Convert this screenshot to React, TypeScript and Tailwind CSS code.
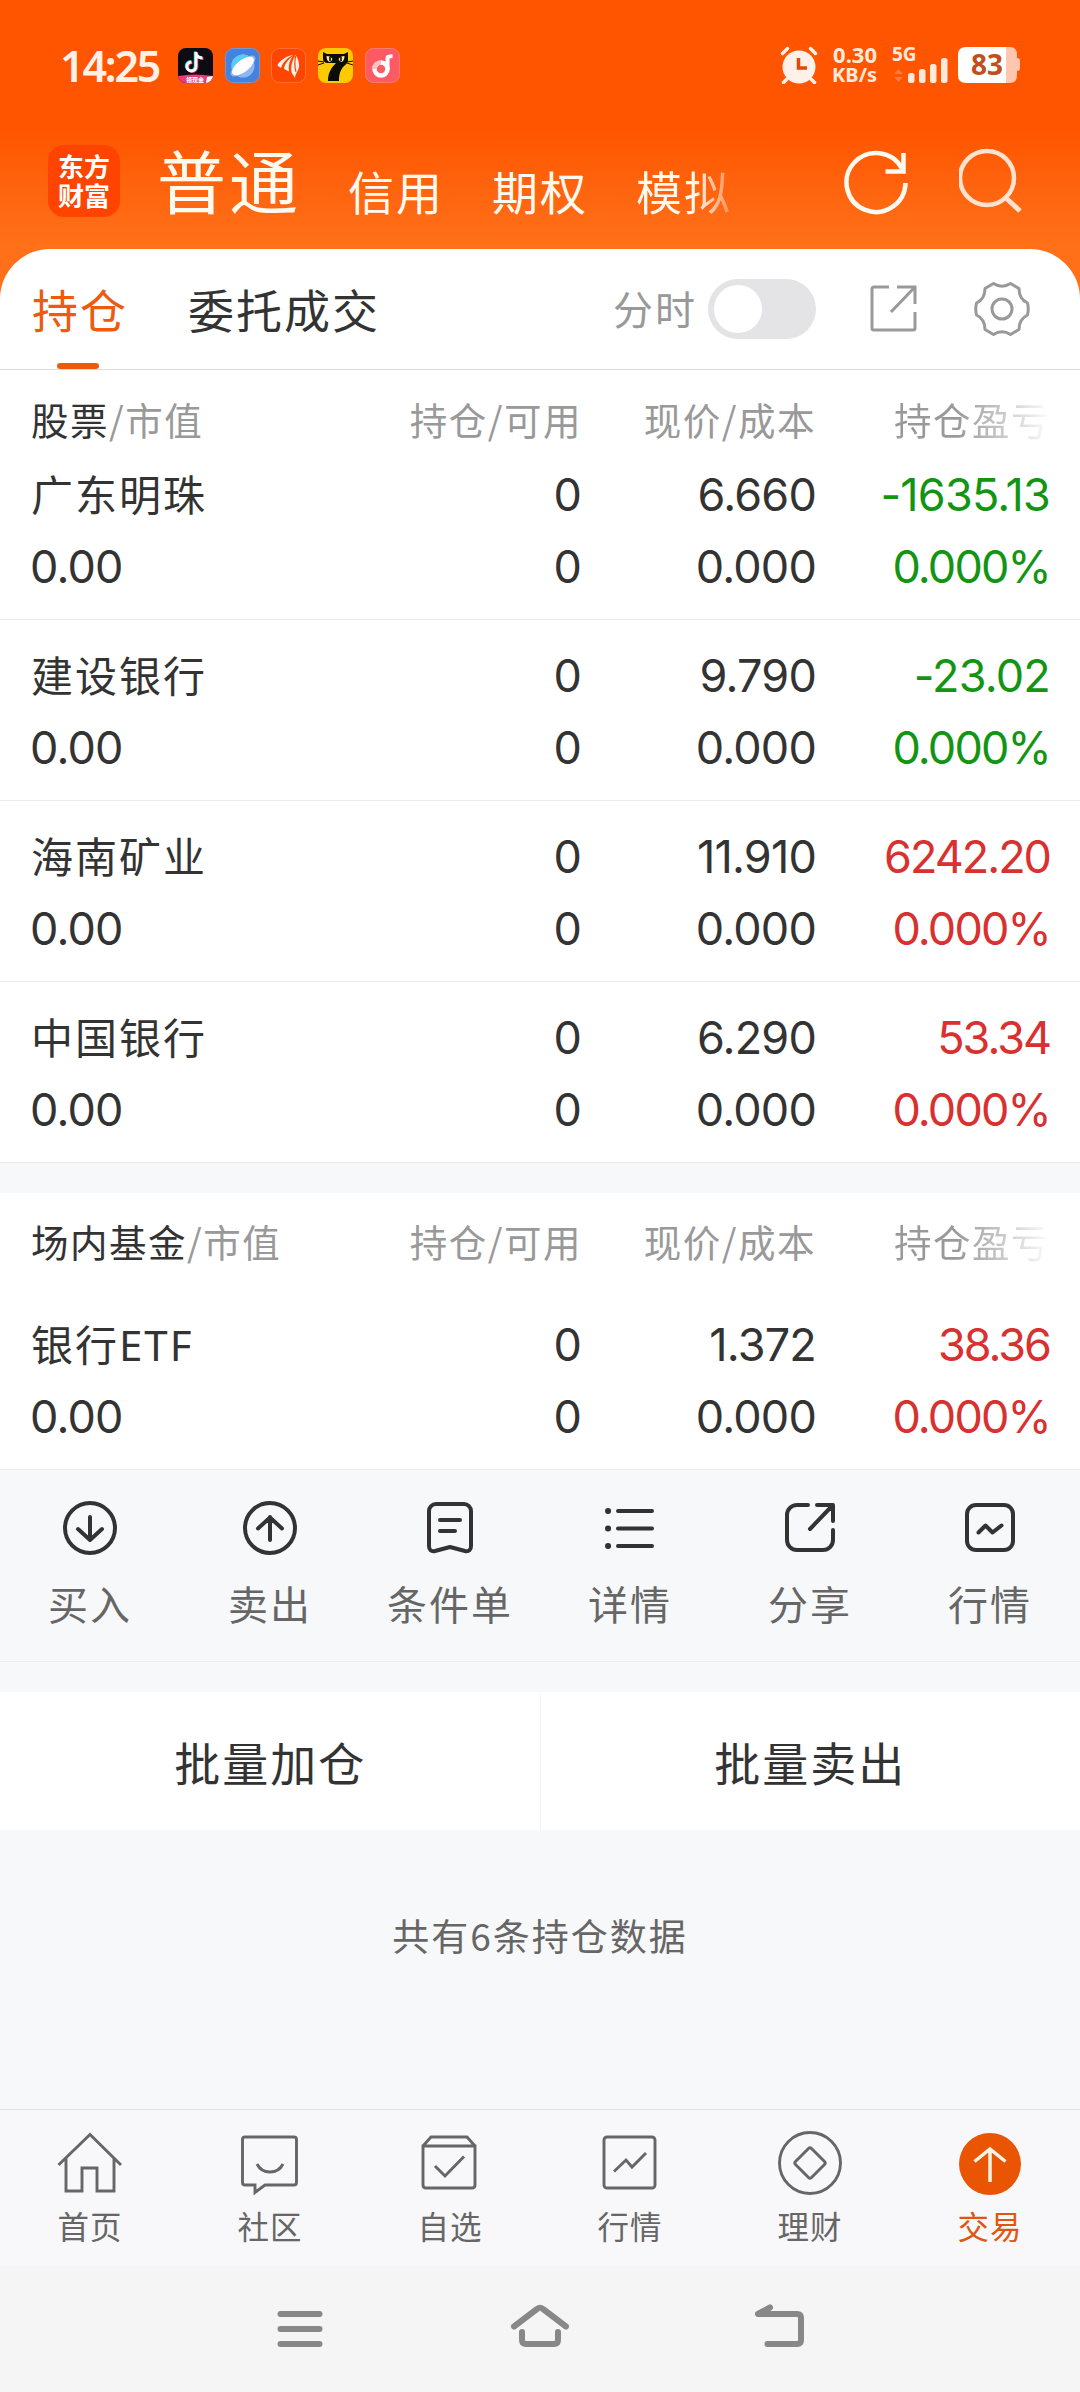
import { useState } from 'react'
import type { ReactNode } from 'react'
import clsx from 'clsx'

type Holding = {
  name: string
  value: string
  amount: string
  usable: string
  price: string
  cost: string
  profit: string
  rate: string
  up: boolean
}

const stocks: Holding[] = [
  { name: '广东明珠', value: '0.00', amount: '0', usable: '0', price: '6.660', cost: '0.000', profit: '-1635.13', rate: '0.000%', up: false },
  { name: '建设银行', value: '0.00', amount: '0', usable: '0', price: '9.790', cost: '0.000', profit: '-23.02', rate: '0.000%', up: false },
  { name: '海南矿业', value: '0.00', amount: '0', usable: '0', price: '11.910', cost: '0.000', profit: '6242.20', rate: '0.000%', up: true },
  { name: '中国银行', value: '0.00', amount: '0', usable: '0', price: '6.290', cost: '0.000', profit: '53.34', rate: '0.000%', up: true },
]

const funds: Holding[] = [
  { name: '银行ETF', value: '0.00', amount: '0', usable: '0', price: '1.372', cost: '0.000', profit: '38.36', rate: '0.000%', up: true },
]

const cols = 'grid grid-cols-[1fr_200px_235px_234px] pl-[31px] pr-[30px]'

function StatusBar() {
  return (
    <div className="flex h-[130px] items-center pl-[60px] pr-[59px]">
      <span className="w-[118px] whitespace-nowrap font-['Noto_Sans',sans-serif] text-[43px] leading-none font-semibold tracking-[-2.2px] text-[#fff0e8]">14:25</span>
      <div className="flex gap-[11.7px]">
        <svg width="35" height="35" viewBox="0 0 35 35">
          <defs>
            <clipPath id="app"><rect width="35" height="35" rx="8" /></clipPath>
          </defs>
          <g clipPath="url(#app)">
            <rect width="35" height="35" fill="#0d0b14" />
            <g fill="none" strokeWidth="2.800">
              <path d="M18 4v14.5a4.5 4.5 0 1 1-4.5-4.5M18 5c.5 3.500 3 5 6.500 5" stroke="#25e5e0" transform="translate(-.8 -.6)" />
              <path d="M18 4v14.500a4.500 4.500 0 1 1-4.500-4.500M18 5c.5 3.500 3 5 6.500 5" stroke="#f5305c" transform="translate(.9 .6)" />
              <path d="M18 4v14.500a4.500 4.500 0 1 1-4.500-4.500M18 5c.5 3.500 3 5 6.500 5" stroke="#fff" />
            </g>
            <path d="M0 28q17-3 35 0v7H0z" fill="#e83c7c" />
            <text x="8" y="33.500" fontSize="6" fontWeight="700" fill="#fff" fontFamily="Noto Sans CJK SC">领现金</text>
            <path d="M28 35l1-6 6-1v4l-3 3z" fill="#fff" />
          </g>
        </svg>
        <svg width="35" height="35" viewBox="0 0 35 35">
          <rect x=".5" y=".5" width="34" height="34" rx="8" fill="#4482df" stroke="#7795cf" />
          <circle cx="18" cy="18" r="11.500" fill="#8fb6f2" />
          <path d="M6.500 18A11.500 11.500 0 0 1 26 9.800L9 26a11 11 0 0 1-2.500-8z" fill="#55cdf7" />
          <ellipse cx="18" cy="18" rx="15" ry="6" transform="rotate(-38 18 18)" fill="#8fb6f2" />
          <ellipse cx="18" cy="18" rx="13" ry="6" transform="rotate(-38 18 18)" fill="#fff" />
        </svg>
        <svg width="35" height="35" viewBox="0 0 35 35">
          <rect x=".5" y=".5" width="34" height="34" rx="8" fill="#ff4500" stroke="#ff7038" />
          <g fill="#fff0e8">
            <path d="M22 7C15 8 10 12 7 16q-1 1 0 2l3 2c2-6 6-10 12-13z" />
            <path d="M23 7c-5 4-9 8-10 13q0 1 1 1.500l4 2C17 17 19 11 23 7z" />
            <path d="M24.500 7c-3 5-5 11-4 17q0 1 1 2l2.500 4C24 25 29 22 28 16c-.5-4-2-7-3.500-9z" />
          </g>
          <path d="M24.500 8q-1.500 9 .5 16" stroke="#ff4500" strokeWidth="1.200" fill="none" />
        </svg>
        <svg width="35" height="35" viewBox="0 0 35 35">
          <rect width="35" height="35" rx="8" fill="#fcca00" />
          <path d="M5 4l4 2h17l4-2v9q-1 3-4 5c-4 4-5 9-5 15H10c0-8 3-13 8-18H9q-4-1-4-4z" fill="#0c0b06" />
          <path d="M0 13l6 1M0 17l6-2M35 13l-6 1M35 17l-6-2" stroke="#0c0b06" />
          <path d="M8.500 8q4 0 6 3-1 3-3 3-3-1-3-6zM26.500 8q-4 0-6 3 1 3 3 3 3-1 3-6z" fill="#ffe98a" />
          <path d="M12 9v4M23 9v4" stroke="#0c0b06" strokeWidth="1.600" />
        </svg>
        <svg width="35" height="35" viewBox="0 0 35 35">
          <rect x=".5" y=".5" width="34" height="34" rx="8" fill="#fd5a64" stroke="#ff7b74" />
          <circle cx="16" cy="21" r="6.500" fill="none" stroke="#fff" strokeWidth="4.500" />
          <path d="M9.500 21A6.500 6.500 0 0 1 16 14.500" fill="none" stroke="#ffc3c4" strokeWidth="4.500" />
          <path d="M20.500 22V10q0-2.500 2-3l5-1v4l-3 .5V22z" fill="#fff" />
        </svg>
      </div>
      <div className="ml-auto flex items-center">
        <svg width="38" height="38" viewBox="0 0 38 38" fill="none" stroke="#fff0e8" strokeLinecap="round">
          <circle cx="19" cy="21" r="16.500" fill="#fff0e8" stroke="none" />
          <path d="M2.500 7.500l5-5M35.500 7.500l-5-5" strokeWidth="3.500" />
          <path d="M7 33l-3.500 3.500M31 33l3.500 3.500" strokeWidth="3.500" />
          <path d="M18.500 12v10h8.500" stroke="#e04a08" strokeWidth="3.500" strokeLinecap="butt" />
        </svg>
        <div className="ml-3 flex w-[47px] flex-col items-end whitespace-nowrap font-['Noto_Sans',sans-serif] font-bold text-[#ffe9dc]">
          <span className="text-[22px] leading-[19px]">0.30</span>
          <span className="text-[20px] leading-[21px]">KB/s</span>
        </div>
        <svg className="ml-[16px] overflow-visible" width="56" height="38" viewBox="0 0 56 38">
          <text x="-1" y="15" fontSize="19" fontWeight="700" fill="#ffe9dc" fontFamily="Noto Sans">5G</text>
          <path d="M1 28l4.500-5 4.500 5zM1 31l4.500 5 4.500-5z" fill="#ff7a3a" />
          <g fill="#ffe9dc">
            <rect x="15" y="27" width="6.500" height="10" rx="2.500" />
            <rect x="26" y="23" width="6.500" height="14" rx="2.500" />
            <rect x="37" y="18" width="6.500" height="19" rx="2.500" />
            <rect x="48" y="12" width="6.500" height="25" rx="2.500" />
          </g>
        </svg>
        <svg className="ml-[8px]" width="64" height="38" viewBox="0 0 64 38">
          <path d="M48 1h5q7 0 7 8v3q3 0 3 3v7q0 3-3 3v4q0 8-7 8h-5z" fill="#ffc6b0" />
          <path d="M9 1h40v36H9q-8 0-8-8V9q0-8 8-8z" fill="#fff" />
          <text x="30" y="29" textAnchor="middle" fontSize="28" fontWeight="700" fill="#c24e1c" fontFamily="Noto Sans">83</text>
        </svg>
      </div>
    </div>
  )
}

function Header() {
  return (
    <header className="flex h-[119px] items-start pt-[15px] pl-[48px] pr-[57px] text-[#fffaf0]">
      <div className="flex h-[72px] w-[72px] flex-col items-center justify-center rounded-[16px] bg-[#ff4400] pb-[2px] text-[26px] leading-[29px] font-bold text-white">
        <span>东方</span>
        <span>财富</span>
      </div>
      <nav className="-mt-[2px] ml-[37px] flex h-[72px] w-[600px] items-end gap-12 whitespace-nowrap">
        <span className="w-[143px] text-[69px] leading-[72px] tracking-[3px]">普通</span>
        <span className="w-24 text-[46px] leading-[50px] tracking-[2px]">信用</span>
        <span className="w-24 text-[46px] leading-[50px] tracking-[2px]">期权</span>
        <span className="w-24 bg-linear-to-r from-[#fffaf0] from-60% to-[#ff8a4a] bg-clip-text text-[46px] leading-[50px] tracking-[2px] text-transparent">模拟</span>
      </nav>
      <svg className="ml-auto" width="68" height="72" viewBox="0 0 68 72" fill="none" stroke="currentColor" strokeWidth="4.500">
        <path d="M63.500 38A29.500 29.500 0 1 1 60 23.500" />
        <path d="M61.500 8v18.500H43.500" />
      </svg>
      <svg className="ml-[49px]" width="64" height="72" viewBox="0 0 64 72" fill="none" stroke="#ffe3d0" strokeWidth="4.500">
        <circle cx="28" cy="33" r="27" />
        <path d="M46.500 52.500L61 66" strokeWidth="5" />
      </svg>
    </header>
  )
}

function TabBar() {
  const [minute, setMinute] = useState(false)

  return (
    <div className="flex h-[121px] border-b border-[#dddddd] pl-[32px] pr-[50px] text-[46px] tracking-[2px]">
      <div className="flex w-24 flex-col items-center text-[#ee5a10]">
        <span className="h-[114px] leading-[119px]">持仓</span>
        <span className="-ml-[4px] h-[6px] w-[42px] rounded-full bg-[#f2580c]" />
      </div>
      <span className="ml-[60px] leading-[119px] text-[#333333]">委托成交</span>
      <div className="ml-auto flex items-center text-[#999999]">
        <span className="-mt-[2px] text-[40px]">分时</span>
        <button
          onClick={() => setMinute(!minute)}
          className={clsx('ml-[11px] flex h-[60px] w-[108px] items-center rounded-full px-[6px]', minute ? 'justify-end bg-[#f2580c]' : 'bg-[#e4e4e6]')}
        >
          <span className="h-12 w-12 rounded-full bg-white" />
        </button>
        <svg className="ml-[54px]" width="48" height="48" viewBox="0 0 48 48" fill="none" stroke="currentColor" strokeWidth="3">
          <path d="M19 2H4Q2 2 2 4v39q0 2 2 2h39q2 0 2-2V27M27 2h18v17M44 3L21 27" />
        </svg>
        <svg className="ml-[56px]" width="56" height="56" viewBox="0 0 56 56" fill="none" stroke="currentColor" strokeWidth="3" strokeLinejoin="round">
          <path d="M19.500 2.500Q28 8 36.500 2.500L45 7.500Q45 18 53.500 22Q55 28 53.500 34Q45 38 45 48.500L36.500 53.500Q28 48 19.500 53.500L11 48.500Q11 38 2.500 34Q1 28 2.500 22Q11 18 11 7.500Z" />
          <circle cx="28" cy="28" r="10" />
        </svg>
      </div>
    </div>
  )
}

function TableHead({ title, className }: { title: string; className: string }) {
  return (
    <div className={clsx(cols, 'content-center whitespace-nowrap text-right text-[37.500px] leading-[54px] tracking-[1.500px] text-[#999999]', className)}>
      <span className="text-left">
        <span className="text-[#333333]">{title}</span>/市值
      </span>
      <span className="-mr-px">持仓/可用</span>
      <span>现价/成本</span>
      <span className="bg-linear-to-r from-[#999999] from-60% to-[#f8f8f8] to-98% bg-clip-text text-transparent">持仓盈亏</span>
    </div>
  )
}

const num = "font-['Inter','Noto_Sans',sans-serif]"

function Row({ item }: { item: Holding }) {
  const color = item.up ? 'text-[#d8312f]' : 'text-[#139513]'

  return (
    <div className={clsx(cols, 'h-[181px] content-start border-b border-[#ececec] pt-[20px] text-right text-[45px] leading-[72px] tracking-[-0.8px] text-[#333333]')}>
      <span className="text-left font-['Noto_Sans','Noto_Sans_CJK_SC',sans-serif] text-[42px] tracking-[2px]">{item.name}</span>
      <span className={num}>{item.amount}</span>
      <span className={num}>{item.price}</span>
      <span className={clsx(num, color, item.up && 'tracking-[-2px]')}>{item.profit}</span>
      <span className={clsx(num, 'text-left -ml-px')}>{item.value}</span>
      <span className={num}>{item.usable}</span>
      <span className={num}>{item.cost}</span>
      <span className={clsx(num, color, 'tracking-[-1.800px]')}>{item.rate}</span>
    </div>
  )
}

const actions: { label: string; icon: ReactNode }[] = [
  { label: '买入', icon: <><circle cx="30" cy="30" r="25" /><path d="M30 19v23M18 31l12 11 12-11" /></> },
  { label: '卖出', icon: <><circle cx="30" cy="30" r="25" /><path d="M30 42V19M18 30.500l12-11 12 11" /></> },
  { label: '条件单', icon: <path d="M9 13a7 7 0 0 1 7-7h28a7 7 0 0 1 7 7v35q0 6-6 5l-15-4-15 4q-6 1-6-5zM20 22h20M20 33h15" /> },
  { label: '详情', icon: <><path d="M18 13h34M18 30.500h34M18 48h34" /><path d="M8 13h.1M8 30.500h.1M8 48h.1" strokeWidth="6" /></> },
  { label: '分享', icon: <path d="M28 7H17A10 10 0 0 0 7 17v25a10 10 0 0 0 10 10h26a10 10 0 0 0 10-10V32M37 7h16v16M52 8L30 31" /> },
  { label: '行情', icon: <><rect x="7" y="7" width="46" height="45" rx="9" /><path d="M18.500 34.500l7-7 7 7 9-7" /></> },
]

function ActionBar() {
  return (
    <div className="grid h-[192px] grid-cols-6 border-b border-[#ececec] pt-[28px]">
      {actions.map((a) => (
        <div key={a.label} className="flex flex-col items-center">
          <svg width="60" height="60" viewBox="0 0 60 60" fill="none" stroke="#333" strokeWidth="4" strokeLinecap="round" strokeLinejoin="round">
            {a.icon}
          </svg>
          <span className="mt-[15px] text-[40px] leading-[60px] tracking-[2px] text-[#666666]">{a.label}</span>
        </div>
      ))}
    </div>
  )
}

const tabs: { label: string; icon: ReactNode }[] = [
  { label: '首页', icon: <path d="M3.500 37L35 6.500l31 30.500M11 30v33h16V40h15v23h17V30" /> },
  { label: '社区', icon: <><path d="M10 9h49q2.500 0 2.500 2.500v43q0 2.500-2.500 2.500H30l-10 7.500V57H10q-2.500 0-2.500-2.500v-43Q7.500 9 10 9z" /><path d="M22 36q4 8 13 8t13-8" /></> },
  { label: '自选', icon: <path d="M8 18v39q0 3 3 3h46q3 0 3-3V18zl8-9h36l8 9M20 38l10 10 19-19.500" /> },
  { label: '行情', icon: <><rect x="9" y="9" width="51" height="51" rx="3" /><path d="M19 43.500l12-11.500 6 7 14-14" /></> },
  { label: '理财', icon: <><circle cx="35" cy="35" r="30.500" /><path d="M33.500 20.500q1.500-1.500 3 0l13 13q1.500 1.500 0 3l-13 13q-1.500 1.500-3 0l-13-13q-1.500-1.500 0-3z" /></> },
  { label: '交易', icon: <><circle cx="35" cy="36" r="31" fill="#ea5504" stroke="none" /><path d="M35 54V21M19.500 33.500L35 21l15.500 12.500" stroke="#fff3e4" strokeWidth="3.500" /></> },
]

function BottomNav() {
  return (
    <nav className="grid h-[157px] grid-cols-6 border-t border-[#dfe1e5] bg-[#f8f8fb] pt-[18px]">
      {tabs.map((t, i) => (
        <div key={t.label} className={clsx('flex flex-col items-center', i === 5 ? 'text-[#e0560f]' : 'text-[#666666]')}>
          <svg width="70" height="70" viewBox="0 0 70 70" fill="none" stroke="#666" strokeWidth="2.900">
            {t.icon}
          </svg>
          <span className="mt-[7px] text-[31.500px] leading-[40px] tracking-[1px]">{t.label}</span>
        </div>
      ))}
    </nav>
  )
}

function SystemNav() {
  return (
    <div className="flex h-[126px] items-center justify-center gap-[180px] bg-[#f5f5f5]">
      {[
        'M10.500 15h39M10.500 30h39M10.500 45h39',
        'M4 27.500L27 10q3-2.500 6 0l23 17.500M12 33v8q0 4 4 4h28q4 0 4-4v-8',
        'M20 8.500L8 15h39q4 0 4 4v22q0 4-4 4H17.500',
      ].map((d) => (
        <svg key={d} width="60" height="60" viewBox="0 0 60 60" fill="none" stroke="#888" strokeWidth="6" strokeLinecap="round" strokeLinejoin="round">
          <path d={d} />
        </svg>
      ))}
    </div>
  )
}

export default function App() {
  return (
    <div className="flex h-[2392px] w-[1080px] flex-col overflow-hidden bg-[#f7f8fa] font-['Noto_Sans_CJK_SC',sans-serif]">
      <div className="h-[300px] bg-linear-to-b from-[#ff5500] from-[130px] to-[#ff7018] to-[245px]">
        <StatusBar />
        <Header />
      </div>

      <div className="-mt-[51px] rounded-t-[50px] bg-white">
        <TabBar />
        <TableHead title="股票" className="h-[69px] pt-[29px]" />
        {stocks.map((s) => (
          <Row key={s.name} item={s} />
        ))}
      </div>

      <div className="mt-[30px] bg-white">
        <TableHead title="场内基金" className="h-[96px]" />
        {funds.map((f) => (
          <Row key={f.name} item={f} />
        ))}
      </div>

      <ActionBar />

      <div className="mt-[30px] grid h-[138px] grid-cols-2 bg-white pl-px text-center text-[46px] leading-[135px] tracking-[2px] text-[#333333]">
        <button className="border-r border-[#f5f5f5]">批量加仓</button>
        <button>批量卖出</button>
      </div>

      <p className="mt-[75px] text-center text-[37px] leading-[60px] tracking-[2px] text-[#666666]">共有6条持仓数据</p>

      <div className="mt-auto">
        <BottomNav />
        <SystemNav />
      </div>
    </div>
  )
}
